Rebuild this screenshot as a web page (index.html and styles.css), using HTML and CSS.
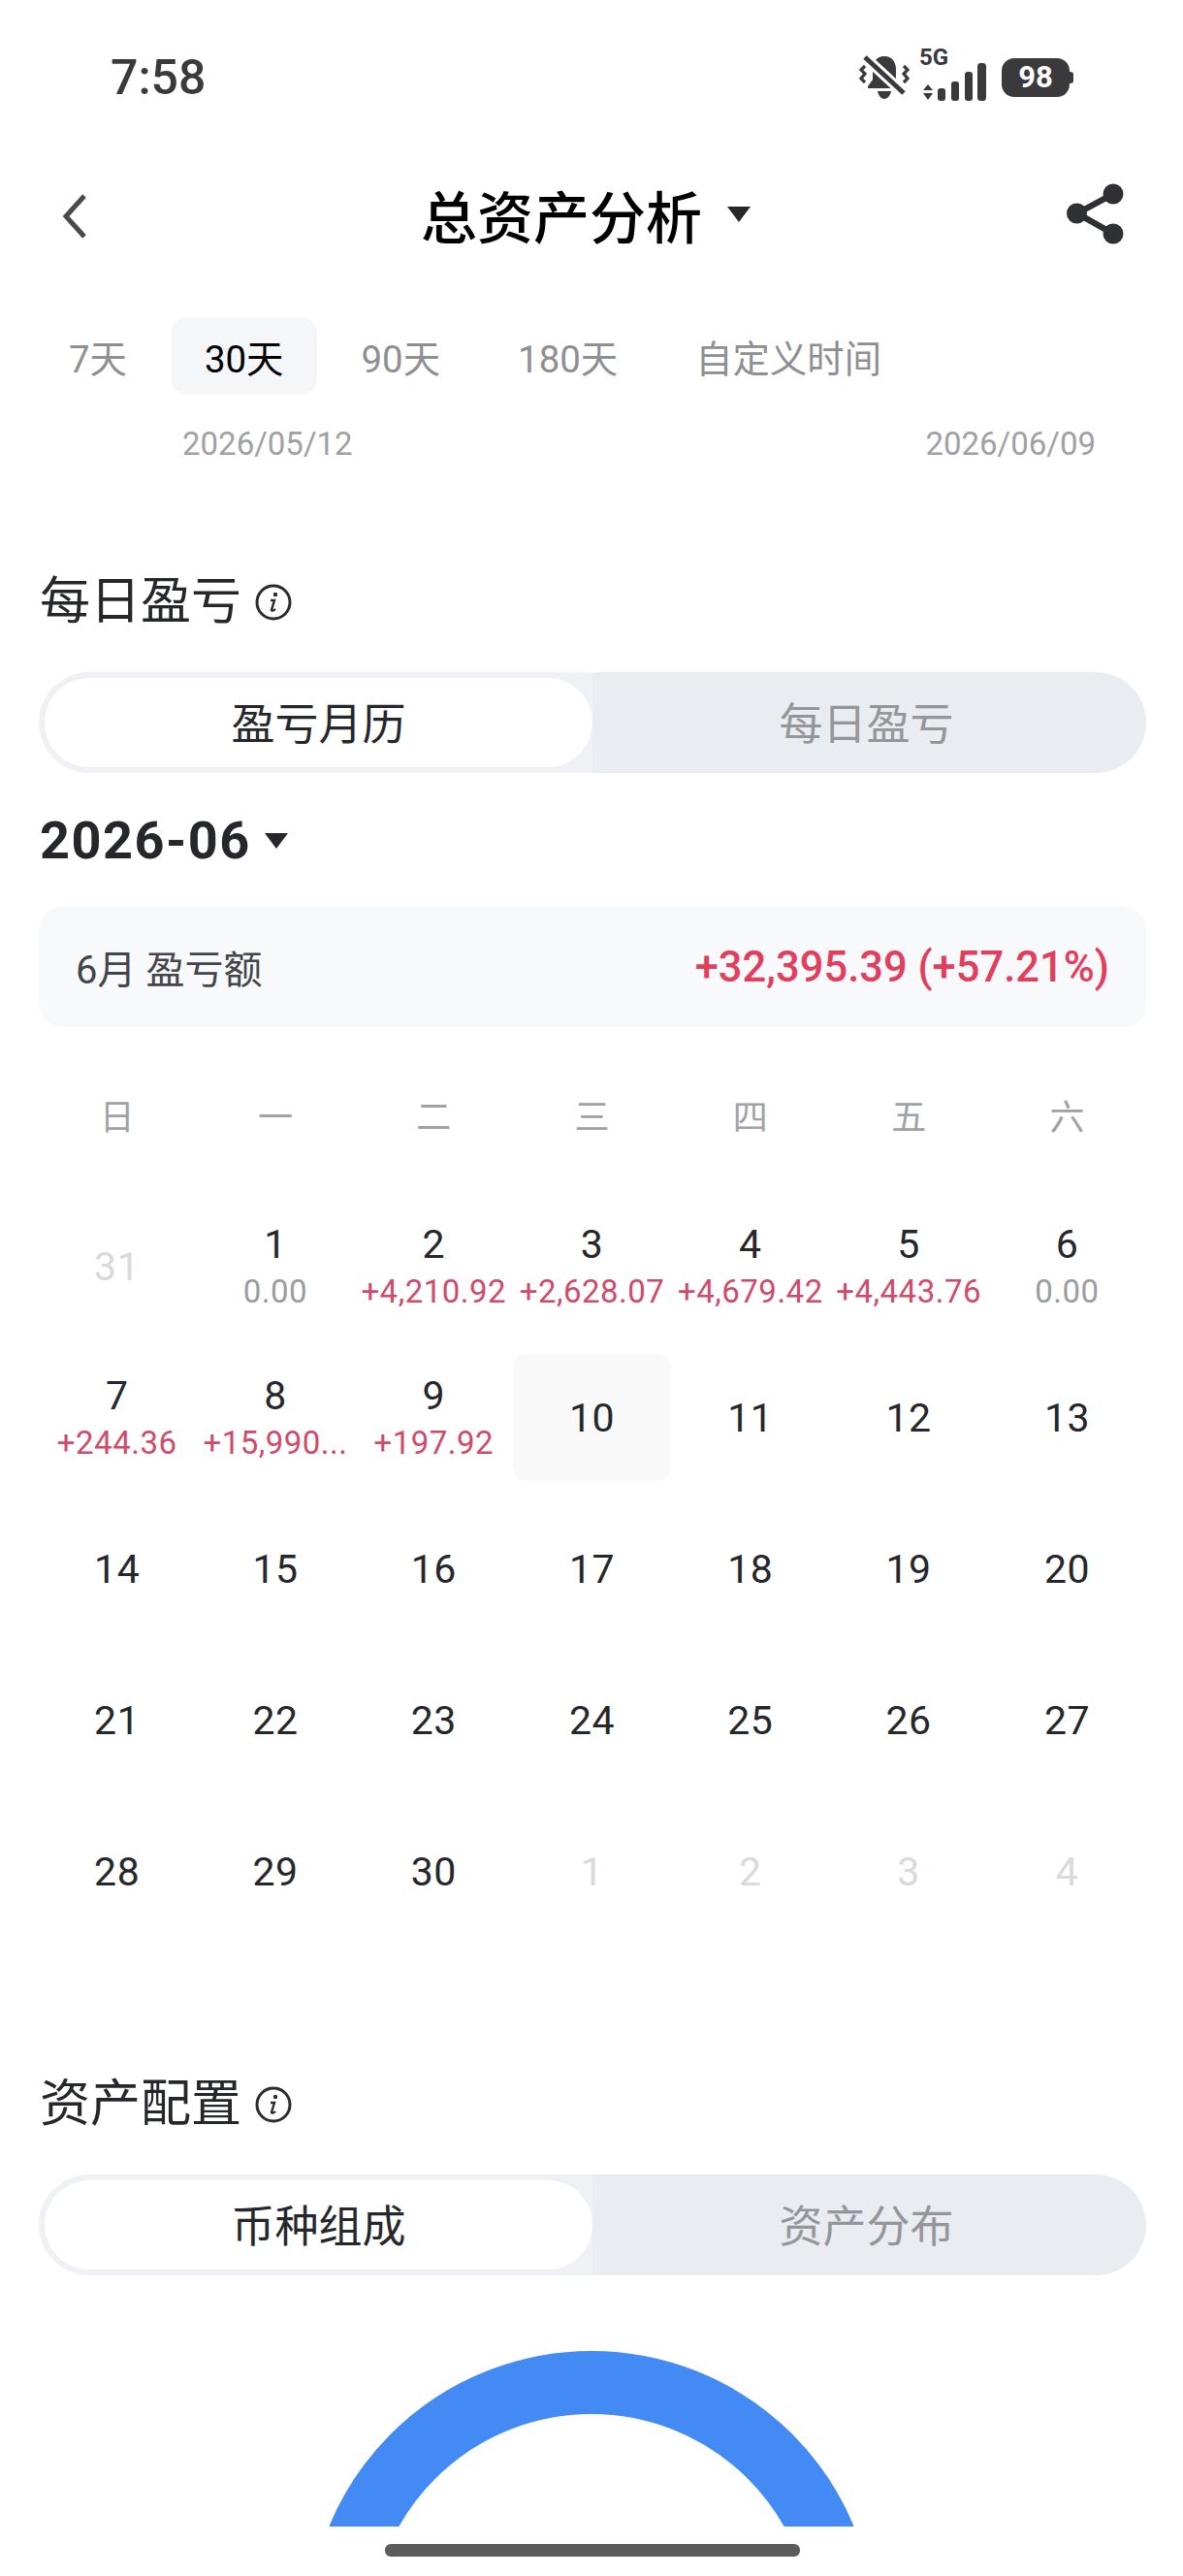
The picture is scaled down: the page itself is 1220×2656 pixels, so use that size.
FILE: index.html
```html
<!DOCTYPE html>
<html lang="zh-CN">
  <head>
    <meta charset="UTF-8" />
    <meta name="viewport" content="width=device-width, initial-scale=1.0" />
    <title>总资产分析</title>
    <link rel="stylesheet" href="styles.css">
  </head>
  <body>
    <div class="status-bar">
      <span class="clock">7:58</span>
      <div class="status-icons">
        <svg class="bell-off" width="54" height="46" viewBox="0 0 54 46">
          <path d="M27 1c-8 0-12 6-12 14v10l-5 7v2h34v-2l-5-7V15c0-8-4-14-12-14z" fill="#3a3a3c" />
          <path d="M20 37h14c-1 5-4 8-7 8s-6-3-7-8z" fill="#3a3a3c" />
          <path d="M7 2l40 37" stroke="#fff" stroke-width="11" />
          <path d="M7 2l40 37" stroke="#3a3a3c" stroke-width="5" />
          <path d="M7 11l-4 4 4 4-4 5 4 4M47 11l4 4-4 4 4 5-4 4" fill="none" stroke="#3a3a3c" stroke-width="3.2" />
        </svg>
        <div class="signal">
          <span class="five-g">5G</span>
          <svg width="67" height="44" viewBox="0 0 67 44">
            <path d="M2 28l5-6 5 6zM2 31h10l-5 7z" fill="#3a3a3c" />
            <rect x="17" y="26" width="8" height="13" rx="3" fill="#3a3a3c" />
            <rect x="31" y="19" width="8" height="20" rx="3" fill="#3a3a3c" />
            <rect x="45" y="9" width="8" height="30" rx="3" fill="#3a3a3c" />
            <rect x="58" y="0" width="9" height="39" rx="3.5" fill="#3a3a3c" />
          </svg>
        </div>
        <div class="battery"><span>98</span></div>
      </div>
    </div>

    <header class="nav-bar">
      <svg class="nav-back" width="34" height="52" viewBox="0 0 34 52">
        <path d="M27 5L8 26l19 21" fill="none" stroke="#4a4a4c" stroke-width="5" />
      </svg>
      <div class="nav-title">总资产分析<i class="caret caret-lg"></i></div>
      <svg class="nav-share" width="60" height="64" viewBox="0 0 60 64">
        <path d="M48 11L11 31l37 21" fill="none" stroke="#2f3033" stroke-width="6.5" />
        <circle cx="48" cy="11" r="10.5" fill="#2f3033" />
        <circle cx="10.5" cy="31" r="10.5" fill="#2f3033" />
        <circle cx="48" cy="52" r="10.5" fill="#2f3033" />
      </svg>
    </header>

    <div class="range-tabs">
      <span class="range-tab">7天</span>
      <span class="range-tab active">30天</span>
      <span class="range-tab">90天</span>
      <span class="range-tab">180天</span>
      <span class="range-tab">自定义时间</span>
    </div>
    <div class="range-dates">
      <span>2026/05/12</span>
      <span>2026/06/09</span>
    </div>

    <section class="daily">
      <h2 class="section-title">每日盈亏
        <svg class="info" width="38" height="38" viewBox="0 0 38 38">
          <circle cx="19" cy="19" r="17" fill="none" stroke="#2b2c30" stroke-width="3" />
          <circle cx="21" cy="11" r="2.2" fill="#2b2c30" />
          <path d="M16 17h4l-3 10c0 1 2 1 4-1" fill="none" stroke="#2b2c30" stroke-width="2.4" />
        </svg>
      </h2>
      <div class="segment">
        <span class="segment-item active">盈亏月历</span>
        <span class="segment-item">每日盈亏</span>
      </div>
      <div class="month-picker">2026-06<i class="caret"></i></div>
      <div class="summary">
        <span class="summary-label">6月 盈亏额</span>
        <span class="summary-value">+32,395.39 (+57.21%)</span>
      </div>

      <div class="week-head">
        <span>日</span><span>一</span><span>二</span><span>三</span><span>四</span><span>五</span><span>六</span>
      </div>
      <div class="calendar">
        <div class="day muted"><b>31</b></div>
        <div class="day"><b>1</b><small class="zero">0.00</small></div>
        <div class="day"><b>2</b><small>+4,210.92</small></div>
        <div class="day"><b>3</b><small>+2,628.07</small></div>
        <div class="day"><b>4</b><small>+4,679.42</small></div>
        <div class="day"><b>5</b><small>+4,443.76</small></div>
        <div class="day"><b>6</b><small class="zero">0.00</small></div>

        <div class="day"><b>7</b><small>+244.36</small></div>
        <div class="day"><b>8</b><small>+15,990...</small></div>
        <div class="day"><b>9</b><small>+197.92</small></div>
        <div class="day today"><b>10</b></div>
        <div class="day"><b>11</b></div>
        <div class="day"><b>12</b></div>
        <div class="day"><b>13</b></div>

        <div class="day"><b>14</b></div>
        <div class="day"><b>15</b></div>
        <div class="day"><b>16</b></div>
        <div class="day"><b>17</b></div>
        <div class="day"><b>18</b></div>
        <div class="day"><b>19</b></div>
        <div class="day"><b>20</b></div>

        <div class="day"><b>21</b></div>
        <div class="day"><b>22</b></div>
        <div class="day"><b>23</b></div>
        <div class="day"><b>24</b></div>
        <div class="day"><b>25</b></div>
        <div class="day"><b>26</b></div>
        <div class="day"><b>27</b></div>

        <div class="day"><b>28</b></div>
        <div class="day"><b>29</b></div>
        <div class="day"><b>30</b></div>
        <div class="day muted"><b>1</b></div>
        <div class="day muted"><b>2</b></div>
        <div class="day muted"><b>3</b></div>
        <div class="day muted"><b>4</b></div>
      </div>
    </section>

    <section class="allocation">
      <h2 class="section-title">资产配置
        <svg class="info" width="38" height="38" viewBox="0 0 38 38">
          <circle cx="19" cy="19" r="17" fill="none" stroke="#2b2c30" stroke-width="3" />
          <circle cx="21" cy="11" r="2.2" fill="#2b2c30" />
          <path d="M16 17h4l-3 10c0 1 2 1 4-1" fill="none" stroke="#2b2c30" stroke-width="2.4" />
        </svg>
      </h2>
      <div class="segment">
        <span class="segment-item active">币种组成</span>
        <span class="segment-item">资产分布</span>
      </div>
      <svg class="donut" width="540" height="181" viewBox="0 0 540 181">
        <circle cx="270" cy="293" r="260.5" fill="none" stroke="#438af5" stroke-width="65" />
      </svg>
    </section>

    <div class="home-bar"></div>
  </body>
</html>
```

FILE: styles.css
```css
* {
  box-sizing: border-box;
}

html,
body {
  margin: 0;
  height: 2656px;
  overflow: hidden;
}

body {
  position: relative;
  background: #fff;
  color: #26272b;
  font-family: Roboto, "Noto Sans CJK SC", sans-serif;
}

.status-bar {
  display: flex;
  justify-content: space-between;
  align-items: center;
  height: 110px;
  padding: 50px 113px 0 114px;
  color: #3a3a3c;
}

.clock {
  font-size: 50px;
  font-weight: 500;
}

.status-icons {
  display: flex;
  align-items: center;
  gap: 11px;
}

.signal {
  position: relative;
  margin-right: 5px;
}

.signal svg {
  display: block;
  margin-top: 14px;
}

.five-g {
  position: absolute;
  left: -2px;
  top: -4px;
  font-size: 24px;
  font-weight: 700;
  line-height: 24px;
}

.battery {
  position: relative;
  width: 70px;
  height: 40px;
  margin-right: 4px;
  border-radius: 13px;
  background: #3a3a3c;
  color: #fff;
  font-size: 31px;
  font-weight: 700;
  line-height: 40px;
  text-align: center;
}

.battery::after {
  content: "";
  position: absolute;
  right: -4px;
  top: 14px;
  width: 4px;
  height: 12px;
  border-radius: 0 3px 3px 0;
  background: #3a3a3c;
}

.nav-bar {
  display: flex;
  justify-content: space-between;
  align-items: center;
  height: 66px;
  margin-top: 78px;
  padding: 0 60px 0 60px;
}

.nav-back {
  margin-top: 4px;
}

.nav-title {
  display: flex;
  align-items: center;
  margin-left: 14px;
  color: #000;
  font-size: 58px;
  font-weight: 500;
}

.caret {
  display: inline-block;
  width: 0;
  height: 0;
  margin-left: 14px;
  border-style: solid;
  border-width: 16px 12px 0;
  border-color: #26272b transparent transparent;
}

.caret-lg {
  margin-left: 26px;
}

.range-tabs {
  display: flex;
  align-items: center;
  gap: 12px;
  height: 78px;
  margin-top: 74px;
  padding-left: 37px;
}

.range-tab {
  display: flex;
  align-items: center;
  height: 78px;
  padding: 0 34px;
  border-radius: 14px;
  color: #8d8f93;
  font-size: 38.4px;
}

.range-tab.active {
  background: #f5f6f8;
  color: #000;
}

.range-dates {
  display: flex;
  justify-content: space-between;
  margin-top: 32px;
  padding: 0 90px 0 188px;
  color: #9fa1a5;
  font-size: 33px;
}

.daily {
  margin-top: 114px;
}

.section-title {
  display: flex;
  align-items: center;
  gap: 14px;
  margin: 0;
  padding-left: 41px;
  color: #26272b;
  font-size: 52px;
  font-weight: 400;
  line-height: 60px;
}

.segment {
  display: flex;
  height: 104px;
  margin: 42px 38px 0 40px;
  padding: 6px;
  border-radius: 52px;
  background: linear-gradient(to right, #eff1f4 50%, #e9ecf1 50%);
}

.segment-item {
  display: flex;
  flex: 1;
  justify-content: center;
  align-items: center;
  padding-bottom: 4px;
  border-radius: 46px;
  color: #94969a;
  font-size: 45px;
}

.segment-item.active {
  background: #fff;
  color: #26272b;
}

.month-picker {
  display: flex;
  align-items: center;
  margin-top: 35px;
  padding-left: 41px;
  font-size: 54px;
  font-weight: 700;
  letter-spacing: 1.5px;
  line-height: 70px;
}

.summary {
  display: flex;
  justify-content: space-between;
  align-items: center;
  height: 124px;
  margin: 33px 38px 0 40px;
  padding: 0 38px;
  border-radius: 24px;
  background: #f8f9fb;
}

.summary-label {
  color: #43454b;
  font-size: 40px;
}

.summary-value {
  color: #e0405e;
  font-size: 43.5px;
  font-weight: 500;
}

.week-head {
  display: grid;
  grid-template-columns: repeat(7, 163.3px);
  margin-top: 71px;
  padding-left: 39px;
  color: #a0a2a6;
  font-size: 36px;
  line-height: 46px;
  text-align: center;
}

.calendar {
  display: grid;
  grid-template-columns: repeat(7, 163.3px);
  grid-auto-rows: 131px;
  row-gap: 25px;
  margin-top: 64px;
  padding-left: 39px;
}

.day {
  display: flex;
  flex-direction: column;
  justify-content: center;
  align-items: center;
  border-radius: 14px;
}

.day b {
  font-size: 41px;
  font-weight: 400;
  letter-spacing: 0.5px;
  line-height: 46px;
}

.day small {
  margin-top: 7px;
  color: #cf4b6b;
  font-size: 33px;
  letter-spacing: 0.5px;
  line-height: 38px;
  white-space: nowrap;
}

.day small.zero {
  color: #9a9ca0;
}

.day.muted {
  color: #d8dade;
}

.day.today {
  background: #f9f9f9;
}

.allocation {
  margin-top: 145px;
}

.donut {
  display: block;
  margin: 78px auto 0;
}

.home-bar {
  position: absolute;
  left: 397px;
  bottom: 20px;
  width: 428px;
  height: 13px;
  border-radius: 6px;
  background: #5c5c5c;
}
```
